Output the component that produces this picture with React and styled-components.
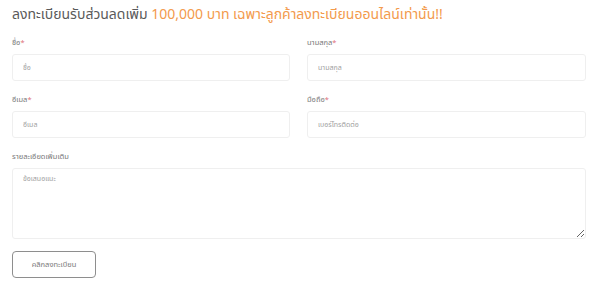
import React from "react";
import styled, { createGlobalStyle } from "styled-components";

const Global = createGlobalStyle`
  html, body { margin: 0; padding: 0; background: #fff; }
  body { font-family: "Noto Sans", "Noto Sans Thai", "Noto Sans CJK SC", sans-serif; }
  * { box-sizing: border-box; }
`;

const Page = styled.div`
  width: 600px;
  height: 286px;
  padding: 4px 14px 0 12px;
  overflow: hidden;
`;

const Heading = styled.h2`
  margin: 0 0 13px;
  font-size: 14px;
  font-weight: 400;
  color: #5a5a5a;
  line-height: 20px;
  white-space: nowrap;
`;

const Accent = styled.span`
  color: #f39a4c;
`;

const Grid = styled.div`
  display: grid;
  grid-template-columns: 278px 279px;
  column-gap: 17px;
  row-gap: 13px;
`;

const Field = styled.div`
  display: flex;
  flex-direction: column;
  gap: 7px;
  grid-column: ${(p) => (p.$full ? "1 / -1" : "auto")};
`;

const Label = styled.label`
  font-size: 7.5px;
  line-height: 10px;
  color: #777;
`;

const Req = styled.span`
  color: #e0707a;
`;

const Input = styled.input`
  height: 27px;
  border: 1px solid #efefef;
  border-radius: 3px;
  padding: 0 10px;
  font-family: inherit;
  font-size: 7px;
  color: #555;
  background: #fff;
  outline: none;
  &::placeholder { color: #a0a0a0; }
`;

const TextArea = styled.textarea`
  height: 71px;
  border: 1px solid #efefef;
  border-radius: 3px;
  padding: 5px 10px;
  font-family: inherit;
  font-size: 7px;
  color: #555;
  resize: both;
  outline: none;
  &::placeholder { color: #a0a0a0; }
`;

const Button = styled.button`
  display: block;
  margin-top: 12px;
  width: 84px;
  height: 27px;
  border: 1px solid #8e8e8e;
  border-radius: 4px;
  background: #fff;
  font-family: inherit;
  font-size: 7.5px;
  color: #777;
`;

export default function App() {
  return (
    <Page>
      <Global />
      <Heading>
        ลงทะเบียนรับส่วนลดเพิ่ม <Accent>100,000 บาท เฉพาะลูกค้าลงทะเบียนออนไลน์เท่านั้น!!</Accent>
      </Heading>
      <Grid>
        <Field>
          <Label>ชื่อ<Req>*</Req></Label>
          <Input placeholder="ชื่อ" />
        </Field>
        <Field>
          <Label>นามสกุล<Req>*</Req></Label>
          <Input placeholder="นามสกุล" />
        </Field>
        <Field>
          <Label>อีเมล<Req>*</Req></Label>
          <Input placeholder="อีเมล" />
        </Field>
        <Field>
          <Label>มือถือ<Req>*</Req></Label>
          <Input placeholder="เบอร์โทรติดต่อ" />
        </Field>
        <Field $full>
          <Label>รายละเอียดเพิ่มเติม</Label>
          <TextArea placeholder="ข้อเสนอแนะ" />
        </Field>
      </Grid>
      <Button>คลิกลงทะเบียน</Button>
    </Page>
  );
}
